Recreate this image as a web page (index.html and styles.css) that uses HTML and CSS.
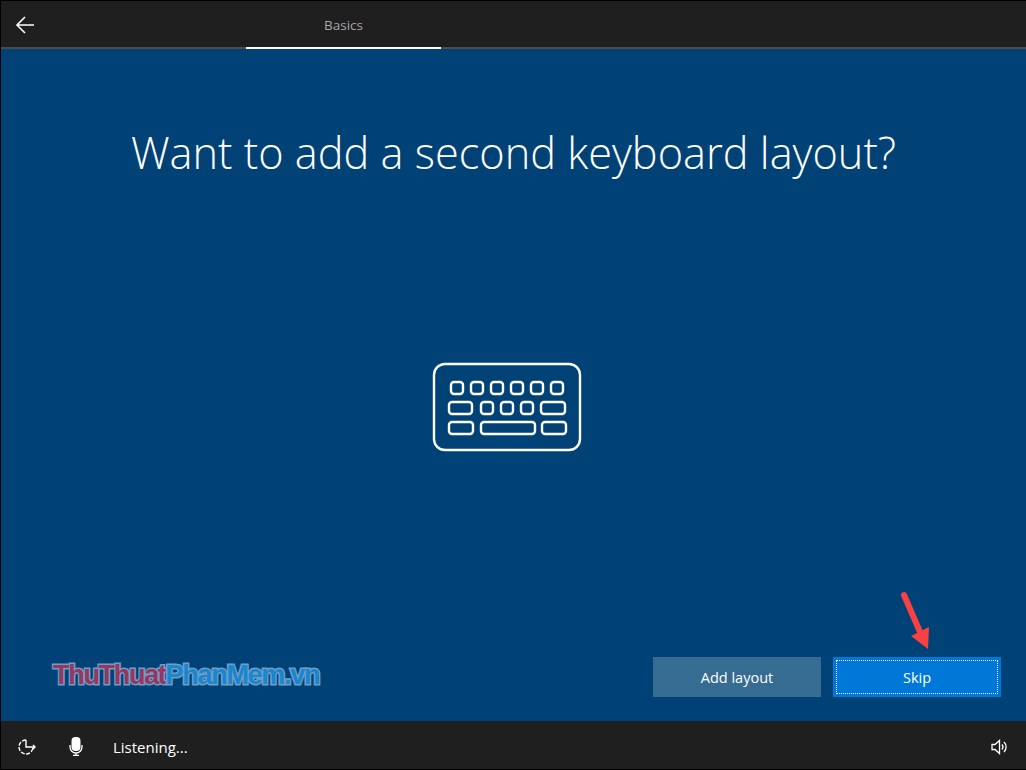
FILE: index.html
```html
<!DOCTYPE html>
<html lang="en">
<head>
  <meta charset="UTF-8">
  <title>Basics - Keyboard layout</title>
  <link rel="stylesheet" href="styles.css">
</head>
<body>
  <div class="screen">
    <header class="topbar">
      <div class="topbar-row">
        <button class="back" aria-label="Back">
          <svg width="20" height="18" viewBox="0 0 20 18"><path d="M10 1 L2 9 L10 17 M2 9 H19" fill="none" stroke="#fff" stroke-width="1.6"/></svg>
        </button>
        <div class="step">Basics</div>
      </div>
      <div class="progress"><div class="progress-done"></div></div>
    </header>

    <main class="content">
      <h1 class="title">Want to add a second keyboard layout?</h1>

      <div class="illustration">
        <svg width="150" height="90" viewBox="0 0 150 90" fill="none" stroke="#fff" stroke-width="2.4">
          <rect x="2" y="2" width="146" height="86" rx="11"/>
          <rect x="19" y="20" width="12" height="12" rx="3"/>
          <rect x="39" y="20" width="12" height="12" rx="3"/>
          <rect x="59" y="20" width="12" height="12" rx="3"/>
          <rect x="79" y="20" width="12" height="12" rx="3"/>
          <rect x="99" y="20" width="12" height="12" rx="3"/>
          <rect x="119" y="20" width="12" height="12" rx="3"/>
          <rect x="17" y="40" width="23" height="12" rx="3"/>
          <rect x="49" y="40" width="12" height="12" rx="3"/>
          <rect x="69" y="40" width="12" height="12" rx="3"/>
          <rect x="89" y="40" width="12" height="12" rx="3"/>
          <rect x="109" y="40" width="24" height="12" rx="3"/>
          <rect x="17" y="60" width="24" height="12" rx="3"/>
          <rect x="49" y="60" width="54" height="12" rx="3"/>
          <rect x="110" y="60" width="24" height="12" rx="3"/>
        </svg>
      </div>

      <div class="footer-row">
        <div class="watermark"><span class="wm-red">ThuThuat</span><span class="wm-blue">PhanMem.vn</span></div>
        <div class="actions">
          <button class="btn">Add layout</button>
          <button class="btn btn-primary"><span class="focus-ring">Skip</span></button>
          <svg class="pointer" width="40" height="62" viewBox="0 0 40 62">
            <path d="M8 5 L24 42" fill="none" stroke="#f94144" stroke-width="6" stroke-linecap="round"/>
            <path d="M15 46 L33 37 L32 59 Z" fill="#f94144"/>
          </svg>
        </div>
      </div>
    </main>

    <footer class="bottombar">
      <svg class="ease" width="20" height="18" viewBox="0 0 20 18" fill="none" stroke="#fff" stroke-width="1.4">
        <path d="M9 2 A7 7 0 1 0 16 9" stroke-dasharray="4 1.5"/>
        <path d="M9 2 V9 H18 M16 7 L18 9 L16 11"/>
      </svg>
      <svg class="mic" width="14" height="19" viewBox="0 0 14 19">
        <rect x="2.5" y="0" width="9" height="14" rx="4" fill="#fff"/>
        <path d="M1 8 V10 A6 6 0 0 0 13 10 V8 M7 16 V18.5 M4 18.5 H10" fill="none" stroke="#fff" stroke-width="1.3"/>
      </svg>
      <span class="status">Listening...</span>
      <svg class="speaker" width="16" height="16" viewBox="0 0 16 16" fill="none" stroke="#fff" stroke-width="1.3">
        <path d="M1 5.5 H4 L8.5 1.5 V14.5 L4 10.5 H1 Z"/>
        <path d="M11 5.5 A4 4 0 0 1 11 10.5 M13 3 A7 7 0 0 1 13 13"/>
      </svg>
    </footer>
  </div>
</body>
</html>
```

FILE: styles.css
```css
* {
  box-sizing: border-box;
}
html, body {
  margin: 0;
  height: 100%;
}
body {
  font-family: "Open Sans", "Noto Sans", sans-serif;
  background-color: #000;
  overflow: hidden;
}
button {
  font-family: inherit;
  border: none;
  padding: 0;
  color: #fff;
  background: none;
}
.screen {
  display: flex;
  flex-direction: column;
  height: 770px;
  padding: 1px 0 1px 1px;
}
.topbar {
  flex: none;
  background-color: #1f1f1f;
}
.topbar-row {
  display: flex;
  align-items: center;
  height: 46px;
  padding-top: 2px;
}
.back {
  display: flex;
  width: 245px;
  padding-left: 14px;
}
.step {
  width: 195px;
  text-align: center;
  font-size: 13.5px;
  color: #a6a6a6;
}
.progress {
  height: 2px;
  background-color: #4c4c4c;
}
.progress-done {
  width: 195px;
  height: 2px;
  margin-left: 245px;
  background-color: #fff;
}
.content {
  flex: 1;
  display: flex;
  flex-direction: column;
  background-color: #004276;
}
.title {
  margin: 0;
  padding-top: 72px;
  text-align: center;
  font-size: 43.3px;
  font-weight: 300;
  line-height: 63px;
  color: #fff;
}
.illustration {
  display: flex;
  justify-content: center;
  margin-top: 178px;
  padding-right: 14px;
}
.footer-row {
  display: flex;
  justify-content: space-between;
  align-items: flex-end;
  margin-top: auto;
  padding: 0 25px 24px 52px;
}
.watermark {
  font-family: "Liberation Sans", sans-serif;
  font-size: 27px;
  font-weight: 700;
  letter-spacing: -1.3px;
  line-height: 32px;
  margin-bottom: 6px;
  -webkit-text-stroke: 3px #6e9ec4;
  paint-order: stroke fill;
}
.wm-red {
  color: #9a3560;
}
.wm-blue {
  color: #1a86d0;
}
.actions {
  position: relative;
  display: flex;
  gap: 12px;
}
.btn {
  width: 168px;
  height: 40px;
  font-size: 14.5px;
  background-color: #366b92;
}
.btn-primary {
  padding: 3px;
  background-color: #0078d7;
}
.focus-ring {
  display: flex;
  align-items: center;
  justify-content: center;
  height: 100%;
  border: 1px dotted #fff;
}
.pointer {
  position: absolute;
  right: 65px;
  bottom: 45px;
}
.bottombar {
  flex: none;
  display: flex;
  align-items: center;
  height: 48px;
  padding: 3px 19px 0 16px;
  background-color: #1f1f1f;
  color: #fff;
}
.mic {
  margin-left: 32px;
}
.status {
  margin-left: 30px;
  font-size: 15px;
}
.speaker {
  margin-left: auto;
}
```
